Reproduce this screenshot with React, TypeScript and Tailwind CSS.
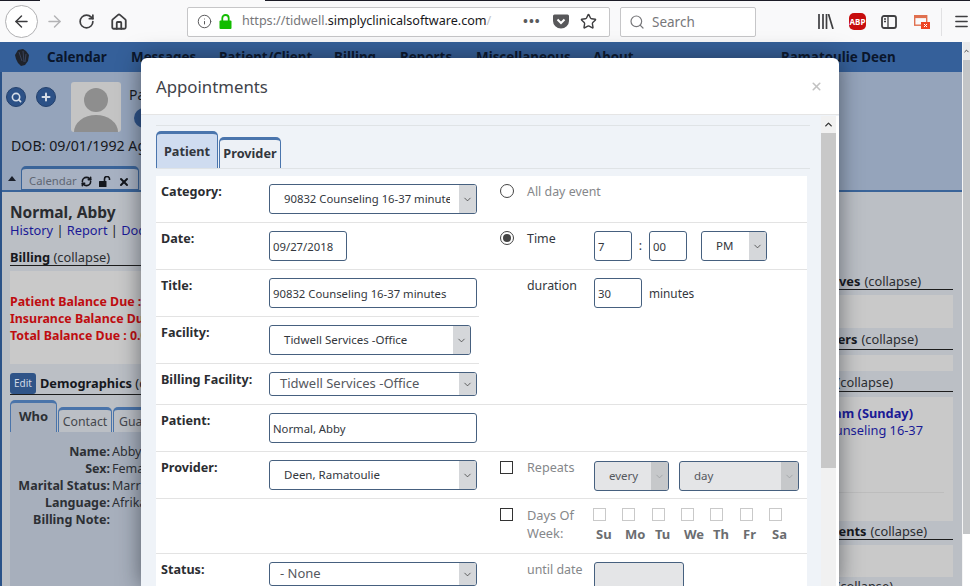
import { ArrowLeft, ArrowRight, ChevronDown, ChevronUp, House, Info, Menu, Plus, RefreshCw, RotateCw, Search, Star, X } from "lucide-react";
import type { ReactNode } from "react";

const navItems = [
  { label: "Calendar", width: "w-[84px]" },
  { label: "Messages", width: "w-[88px]" },
  { label: "Patient/Client", width: "w-[115px]" },
  { label: "Billing", width: "w-[66px]" },
  { label: "Reports", width: "w-[76px]" },
  { label: "Miscellaneous", width: "w-[117px]" },
  { label: "About", width: "w-[188px]" },
];

const weekDays = [
  { label: "Su", width: "w-[29px]" },
  { label: "Mo", width: "w-[30px]" },
  { label: "Tu", width: "w-[29px]" },
  { label: "We", width: "w-[29px]" },
  { label: "Th", width: "w-[30px]" },
  { label: "Fr", width: "w-[29px]" },
  { label: "Sa", width: "w-[29px]" },
];

const demographics = [
  ["Name:", "Abby"],
  ["Sex:", "Female"],
  ["Marital Status:", "Married"],
  ["Language:", "Afrikaans"],
  ["Billing Note:", ""],
];

function Toolbar() {
  return (
    <div className="h-[42px] bg-[#f9f9fa] flex items-center relative border-t border-t-[#f9f9fa]">
      <div className="ml-[5px] w-[33px] h-[33px] rounded-full border border-[#b1b1b3] bg-white flex items-center justify-center">
        <ArrowLeft size={19} strokeWidth={1.8} className="text-[#3b3b3d]" />
      </div>
      <ArrowRight size={19} strokeWidth={1.8} className="ml-[7px] text-[#b3b3b5]" />
      <RotateCw size={17} strokeWidth={2.4} className="ml-[14px] text-[#3f3f41]" />
      <House size={18} strokeWidth={2.4} className="ml-[15px] text-[#3f3f41]" />
      <div className="ml-[59px] w-[423px] h-[30px] bg-white border border-[#c6c6c8] rounded-[2px] flex items-center">
        <Info size={15} strokeWidth={1.6} className="ml-[9px] text-[#5a5a5c]" />
        <svg width="13" height="15" viewBox="0 0 13 15" className="ml-[7px]">
          <path d="M3.3 7V4.2a3.2 3.2 0 0 1 6.4 0V7" fill="none" stroke="#12bc00" strokeWidth="1.8" />
          <rect x="0.5" y="6.5" width="12" height="8.5" rx="1" fill="#12bc00" />
        </svg>
        <div className="ml-[10px] w-[256px] overflow-hidden whitespace-nowrap text-[12.6px] text-[#77777a]">
          https://tidwell.<span className="text-[#17171a]">simplyclinicalsoftware.com</span><span className="text-[#c4c4c6]">/</span>
        </div>
        <span className="ml-[25px] text-[#5a5a5c] text-[13px] font-bold tracking-[1px] leading-none">•••</span>
        <svg width="16" height="15" viewBox="0 0 16 15" className="ml-[12px]">
          <path d="M1.5 0.5h13a1.5 1.5 0 0 1 1.5 1.5v5a8 7.5 0 0 1-16 0V2a1.5 1.5 0 0 1 1.5-1.5z" fill="#58585a" />
          <path d="M4.5 5.5L8 9l3.5-3.5" stroke="#fff" strokeWidth="2" fill="none" />
        </svg>
        <Star size={17} strokeWidth={2} className="ml-[11px] text-[#3f3f41]" />
      </div>
      <div className="ml-[10px] w-[136px] h-[30px] bg-white border border-[#c6c6c8] rounded-[2px] flex items-center">
        <Search size={16} strokeWidth={1.8} className="ml-[8px] text-[#77777a]" />
        <span className="ml-[7px] pt-[1px] text-[13.5px] text-[#77777a]">Search</span>
      </div>
      <svg width="16" height="15" viewBox="0 0 16 15" className="ml-[62px]" fill="none" stroke="#3f3f41" strokeWidth="1.7">
        <path d="M1 0v15M5 0v15M8.5 0v15M10.5 0l4.5 15" />
      </svg>
      <div className="ml-[15px] w-[17px] h-[17px] rounded-[5px] bg-[#c70d0d] flex items-center justify-center text-white text-[8px] font-bold leading-none">
        ABP
      </div>
      <svg width="16" height="14" viewBox="0 0 16 14" className="ml-[15px]" fill="none" stroke="#3f3f41" strokeWidth="1.8">
        <rect x="1" y="1" width="14" height="12" rx="2" />
        <path d="M7 1v12M3 4h2M3 6.5h2" strokeWidth="1.3" />
      </svg>
      <svg width="16" height="14" viewBox="0 0 16 14" className="ml-[17px]">
        <rect x="0.7" y="0.7" width="12" height="9.5" fill="none" stroke="#e0704f" strokeWidth="1.4" />
        <rect x="0.7" y="0.7" width="12" height="2.4" fill="#e0704f" />
        <rect x="7" y="7" width="9" height="7" fill="#ee4423" />
        <path d="M10 9l3 3M13 9l-3 3" stroke="#fff" strokeWidth="1" />
      </svg>
      <div className="ml-[11px] w-px h-[28px] bg-[#e1e1e3]" />
      <Menu size={17} strokeWidth={2} className="ml-[11px] text-[#3f3f41]" />
      <div className="absolute -top-px left-0 w-[40px] h-px bg-[#1b1b26]" />
      <div className="absolute -top-px left-[265px] right-0 h-px bg-[#1b1b26]" />
    </div>
  );
}

function PageBackground() {
  return (
    <div className="h-[544px] flex flex-col border-l-2 border-l-[#2a5288] mr-[8px] text-[#16181d] relative">
      {/* barra de navegação */}
      <div className="h-[30px] -ml-[2px] bg-[#35609a] flex items-center pt-[1px] text-[13.4px] font-bold text-[#0a162c] shrink-0">
        <svg width="16" height="18" viewBox="0 0 16 18" className="ml-[14px] mr-[17px]">
          <path d="M4 1l5-1 3 2 3 4-1 6-3 4-4 1-3-3-2-4-1-4z" fill="#1f232c" />
          <path d="M5 3l3 9M9 2l1 11M12 5l-1 8" stroke="#3d4a66" strokeWidth="0.8" />
        </svg>
        {navItems.map((item) => (
          <span key={item.label} className={item.width}>{item.label}</span>
        ))}
        <span>Ramatoulie Deen</span>
      </div>

      {/* cabeçalho do paciente */}
      <div className="h-[120px] bg-[#95a4bb] border-b-2 border-b-[#3a6499] shrink-0">
        <div className="flex pl-[4px] pt-[10px] h-[60px]">
          <div className="mt-[5px] w-[20px] h-[20px] rounded-full bg-[#2c5187] border border-[#23406c] flex items-center justify-center">
            <Search size={11} strokeWidth={3.5} className="text-[#d5dce6]" />
          </div>
          <div className="ml-[10px] mt-[5px] w-[20px] h-[20px] rounded-full bg-[#2c5187] border border-[#23406c] flex items-center justify-center">
            <Plus size={12} strokeWidth={4} className="text-[#d5dce6]" />
          </div>
          <svg width="50" height="50" viewBox="0 0 50 50" className="ml-[15px] bg-[#c4c4c4] rounded-[3px]">
            <circle cx="25" cy="18" r="12" fill="#8e8e8e" />
            <path d="M3 50a22 17 0 0 1 44 0z" fill="#8e8e8e" />
          </svg>
          <div className="ml-[8px] text-[14px] pt-[2px]">
            <div>Patient:</div>
            <div className="mt-[3px] ml-[5px] w-[20px] h-[20px] rounded-full bg-[#2c5187]" />
          </div>
        </div>
        <div className="pl-[9px] pt-[4px] text-[14.2px] leading-[20px]">DOB: 09/01/1992 Age: 26</div>
        <div className="flex items-end mt-[10px]">
          <span className="ml-[6px] mr-[5px] mb-[9px] w-0 h-0 border-x-[4px] border-x-transparent border-b-[5px] border-b-[#1a1f2a]" />
          <div className="w-[118px] h-[24px] bg-[#a7b1c2] border border-[#3a6499] border-t-[3px] rounded-t-[5px] flex items-center pl-[7px] pt-[5px] text-[11.3px] text-[#5f6773]">
            Calendar
            <RefreshCw size={11} strokeWidth={3.5} className="ml-[4px] text-[#14171d]" />
            <svg width="12" height="11" viewBox="0 0 12 11" className="ml-[7px]">
              <rect x="0" y="5" width="7.5" height="6" rx="0.5" fill="#14171d" />
              <path d="M5.5 5V3a2.5 2.5 0 0 1 5 0v1" fill="none" stroke="#14171d" strokeWidth="1.6" />
            </svg>
            <X size={12} strokeWidth={4} className="ml-[7px] text-[#14171d]" />
          </div>
        </div>
      </div>

      {/* conteúdo da página */}
      <div className="flex-1 min-h-0 bg-[#bbbfc5] flex overflow-hidden">
        <div className="w-[420px] pl-[8px] shrink-0">
          <div className="mt-[9px] text-[15.5px] font-bold leading-[22px] text-[#2a2c30]">Normal, Abby</div>
          <div className="-mt-[2px] text-[12.8px] leading-[18px] text-[#1a1a96]">
            History <span className="text-[#222]">|</span> Report <span className="text-[#222]">|</span> Documents
          </div>
          <div className="mt-[8px] h-[19px] border-b border-b-[#1c1c1c] text-[12.8px] leading-[20px]">
            <b>Billing</b> <span className="text-[#2a2c30]">(collapse)</span>
          </div>
          <div className="mt-[5px] h-[93px] bg-[#c9c9c9] pt-[22px] text-[12.4px] font-bold leading-[17px] text-[#bf0d10]">
            <div>Patient Balance Due : 0.00</div>
            <div>Insurance Balance Due : 0.00</div>
            <div>Total Balance Due : 0.00</div>
          </div>
          <div className="mt-[10px] flex items-end h-[21px] border-b border-b-[#1c1c1c] text-[12.8px]">
            <span className="w-[26px] h-[21px] rounded-[3px] bg-[#2f5488] text-[#cfd8e6] text-[10px] flex items-center justify-center">Edit</span>
            <span className="ml-[4px] leading-[21px]"><b>Demographics</b> (collapse)</span>
          </div>
          <div className="flex items-end h-[37px] text-[12.3px]">
            <div className="w-[47px] h-[32px] bg-[#a7afbc] border border-[#4a74aa] border-t-[3px] border-b-0 rounded-t-[5px] text-center leading-[26px] text-[13px] font-bold text-[#2d3035]">Who</div>
            <div className="ml-[1px] w-[54px] h-[25px] bg-[#bbbfc5] border border-[#4a74aa] border-t-[3px] border-b-0 rounded-t-[5px] text-center leading-[24px] text-[#44474d]">Contact</div>
            <div className="ml-[1px] w-[90px] h-[25px] bg-[#bbbfc5] border border-[#4a74aa] border-t-[3px] border-b-0 rounded-t-[5px] pl-[5px] leading-[24px] text-[#44474d]">Guardian</div>
          </div>
          <div className="h-[200px] bg-[#a7afbc] pt-[11px] text-[12.5px] leading-[17px]">
            {demographics.map(([name, value]) => (
              <div key={name} className="flex">
                <span className="w-[100px] text-right font-bold text-[#2d3035] whitespace-nowrap">{name}</span>
                <span className="ml-[2px] text-[#2d3035]">{value}</span>
              </div>
            ))}
          </div>
        </div>
        <div className="flex-1 text-[12.8px] flex flex-col items-stretch pr-[9px] ml-[220px] mt-[80px] whitespace-nowrap">
          <SideHeader pad="pr-[32px]" height="h-[18px]" title="Advance Directives" />
          <div className="mt-[5px] h-[33px] shrink-0 bg-[#c9c9c9]" />
          <SideHeader pad="pr-[35px]" height="h-[20px]" title="Reminders" className="mt-[2px]" />
          <div className="mt-[5px] h-[16px] shrink-0 bg-[#c9c9c9]" />
          <SideHeader pad="pr-[60px]" height="h-[19px]" title="" className="mt-[2px]" />
          <div className="mt-[5px] h-[124px] shrink-0 bg-[#c9c9c9] text-right text-[#1a1a96] pt-[8px] leading-[17px] relative">
            <div className="font-bold pr-[40px]">9:00 am (Sunday)</div>
            <div className="pr-[30px]">Counseling 16-37</div>
            <div className="absolute left-0 right-[9px] bottom-[28px] h-px bg-[#bdbdbd]" />
          </div>
          <SideHeader pad="pr-[26px]" height="h-[18px]" title="Appointments" className="mt-[1px]" />
          <div className="mt-[5px] h-[32px] shrink-0 bg-[#c9c9c9]" />
          <SideHeader pad="pr-[60px]" height="h-[18px]" title="" />
        </div>
      </div>

      {/* barra de rolagem da página */}
      <div className="absolute left-full top-0 w-[8px] h-full bg-white border-l border-l-[#f5f5f5]">
        <div className="h-[18px] bg-[#e9e9ea] flex items-center justify-center">
          <ChevronUp size={8} strokeWidth={3} className="text-[#333]" />
        </div>
        <div className="h-[474px] bg-[#c3c5c7]" />
      </div>
    </div>
  );
}

function SideHeader({ title, pad, height, className = "" }: { title: string; pad: string; height: string; className?: string }) {
  return (
    <div className={`${height} shrink-0 border-b border-b-[#1c1c1c] flex justify-end leading-[18px] text-[#2a2c30] ${pad} ${className}`}>
      {title && <b className="text-[#16181d] mr-[4px]">{title}</b>}
      (collapse)
    </div>
  );
}

function FakeSelect({ value, width, height = "h-[30px]", text = "text-[11.5px] text-[#33373d] pl-[14px]", disabled = false }: { value: string; width: string; height?: string; text?: string; disabled?: boolean }) {
  return (
    <div className={`${width} ${height} border border-[#46607f] rounded-[3px] flex overflow-hidden ${disabled ? "bg-[#e4e5e7]" : "bg-white"}`}>
      <span className={`flex-1 min-w-0 overflow-hidden whitespace-nowrap self-center ${text}`}>{value}</span>
      <span className={`w-[17px] shrink-0 flex items-center justify-center ${disabled ? "bg-[#c6c8ca]" : "bg-[#d5d7da]"}`}>
        <ChevronDown size={11} strokeWidth={1.6} className={disabled ? "text-[#9a9c9f]" : "text-[#333]"} />
      </span>
    </div>
  );
}

function TextBox({ value, width, disabled = false }: { value: string; width: string; disabled?: boolean }) {
  return (
    <input
      readOnly
      value={value}
      disabled={disabled}
      className={`${width} h-[30px] border border-[#46607f] rounded-[3px] px-[3px] text-[11.3px] text-[#33373d] ${disabled ? "bg-[#e4e5e7]" : "bg-white"}`}
    />
  );
}

function LeftCell({ label, children, className = "" }: { label: string; children: ReactNode; className?: string }) {
  return (
    <div className={`border-b border-b-[#e3e3e3] flex pl-[5px] pt-[8px] ${className}`}>
      <span className="w-[108px] shrink-0 text-[12.6px] font-bold text-[#2b2d31] leading-[15px]">{label}</span>
      {children}
    </div>
  );
}

function Box() {
  return <span className="w-[13px] h-[13px] border-[1.5px] border-[#333] shrink-0" />;
}

function Radio({ checked = false }: { checked?: boolean }) {
  return (
    <span className="w-[14px] h-[14px] rounded-full border border-[#444] shrink-0 flex items-center justify-center">
      {checked && <span className="w-[8px] h-[8px] rounded-full bg-[#444]" />}
    </span>
  );
}

function AppointmentsModal() {
  return (
    <div className="absolute left-[141px] top-[16px] bottom-0 w-[698px] bg-white rounded-t-[6px] shadow-[0_0_22px_rgba(20,25,35,0.55)] flex flex-col overflow-hidden">
      <div className="h-[57px] shrink-0 border-b border-b-[#e5e5e5] flex items-center justify-between pl-[15px] pr-[16px]">
        <span className="pt-[1px] text-[16.8px] text-[#3f434a]">Appointments</span>
        <X size={13} strokeWidth={3} className="text-[#c2c2c2]" />
      </div>
      <div className="flex-1 min-h-0 flex bg-[#eff3f8] pl-[15px] pt-[1px]">
        <div className="w-[665px] shrink-0">
          <div className="mt-[9px] pt-[6px] border-t border-t-[#dfe3e6] w-[654px] flex items-end h-[44px] border-b border-b-[#dfe3e6] text-[12.7px] font-bold text-[#33373d]">
            <div className="w-[62px] h-[37px] bg-[#cfdcf0] border border-[#4a75ad] border-t-[3px] border-b-0 rounded-t-[5px] text-center leading-[34px]">Patient</div>
            <div className="ml-[1px] w-[62px] h-[31px] bg-[#edf1f6] border border-[#4a75ad] border-t-[3px] border-b-0 rounded-t-[5px] text-center leading-[26px]">Provider</div>
          </div>
          <div className="mt-[7px] w-[651px] bg-white grid grid-cols-[323px_328px] grid-rows-[47px_47px_47px_47px_41px_47px_47px_55px_60px]">
            <LeftCell label="Category:">
              <FakeSelect value="90832 Counseling 16-37 minutes" width="w-[208px]" text="text-[11.3px] text-[#33373d] pl-[14px] mr-[9px]" />
            </LeftCell>
            <div className="border-b border-b-[#e3e3e3] flex pl-[21px] pt-[8px] text-[12.4px] text-[#85878a]">
              <Radio />
              <span className="ml-[13px] leading-[15px]">All day event</span>
            </div>

            <LeftCell label="Date:">
              <TextBox value="09/27/2018" width="w-[78px]" />
            </LeftCell>
            <div className="border-b border-b-[#e3e3e3] flex pl-[21px] pt-[8px] text-[12.4px] text-[#33373d]">
              <Radio checked />
              <span className="ml-[13px] w-[67px] leading-[15px]">Time</span>
              <TextBox value="7" width="w-[38px]" />
              <span className="w-[17px] text-center leading-[30px]">:</span>
              <TextBox value="00" width="w-[38px]" />
              <div className="ml-[14px]">
                <FakeSelect value="PM" width="w-[66px]" />
              </div>
            </div>

            <LeftCell label="Title:">
              <TextBox value="90832 Counseling 16-37 minutes" width="w-[208px]" />
            </LeftCell>
            <div className="row-span-3 border-b border-b-[#e3e3e3] flex pl-[48px] pt-[8px] text-[12.4px] text-[#33373d]">
              <span className="w-[67px] leading-[15px]">duration</span>
              <TextBox value="30" width="w-[48px]" />
              <span className="ml-[7px] leading-[30px] text-[11.8px]">minutes</span>
            </div>

            <LeftCell label="Facility:">
              <FakeSelect value="Tidwell Services -Office" width="w-[202px]" />
            </LeftCell>

            <LeftCell label="Billing Facility:">
              <FakeSelect value="Tidwell Services -Office" width="w-[208px]" height="h-[24px]" text="text-[13px] text-[#55585e] pl-[10px]" />
            </LeftCell>

            <LeftCell label="Patient:">
              <TextBox value="Normal, Abby" width="w-[208px]" />
            </LeftCell>
            <div className="border-b border-b-[#e3e3e3]" />

            <LeftCell label="Provider:">
              <FakeSelect value="Deen, Ramatoulie" width="w-[208px]" />
            </LeftCell>
            <div className="border-b border-b-[#e3e3e3] flex pl-[21px] pt-[9px] text-[12.6px] text-[#85878a]">
              <Box />
              <span className="ml-[14px] w-[67px] leading-[15px] -mt-px">Repeats</span>
              <FakeSelect value="every" width="w-[75px]" text="text-[11.5px] text-[#55585e] pl-[14px]" disabled />
              <div className="ml-[10px]">
                <FakeSelect value="day" width="w-[120px]" text="text-[11.5px] text-[#55585e] pl-[14px]" disabled />
              </div>
            </div>

            <div className="border-b border-b-[#e3e3e3]" />
            <div className="border-b border-b-[#e3e3e3] flex pl-[21px] pt-[9px] text-[12.8px] text-[#85878a]">
              <Box />
              <span className="ml-[14px] w-[66px] leading-[18px] -mt-[2px]">Days Of Week:</span>
              <div className="flex">
                {weekDays.map((day) => (
                  <div key={day.label} className={`${day.width} flex flex-col`}>
                    <span className="w-[13px] h-[13px] border border-[#c9c9c9]" />
                    <span className="mt-[6px] pl-[3px] text-[13px] font-bold text-[#6b6d70] leading-[15px]">{day.label}</span>
                  </div>
                ))}
              </div>
            </div>

            <LeftCell label="Status:">
              <FakeSelect value="- None" width="w-[208px]" height="h-[24px]" text="text-[13px] text-[#55585e] pl-[10px]" />
            </LeftCell>
            <div className="flex pl-[48px] pt-[8px] text-[12.4px] text-[#85878a]">
              <span className="w-[67px] leading-[15px]">until date</span>
              <TextBox value="" width="w-[90px]" disabled />
            </div>
          </div>
        </div>
        <div className="w-[15px] shrink-0 flex flex-col bg-[#f1f1f1]">
          <div className="h-[17px] bg-[#f1f1f1] flex items-center justify-center">
            <ChevronUp size={11} strokeWidth={3} className="text-[#333]" />
          </div>
          <div className="h-[335px] bg-[#c8c8c8]" />
        </div>
        <div className="w-[3px] bg-white shrink-0" />
      </div>
    </div>
  );
}

export default function App() {
  return (
    <div className="w-[970px] h-[586px] overflow-hidden relative bg-white font-['Noto_Sans',sans-serif]">
      <Toolbar />
      <div className="relative">
        <PageBackground />
        <AppointmentsModal />
      </div>
    </div>
  );
}
